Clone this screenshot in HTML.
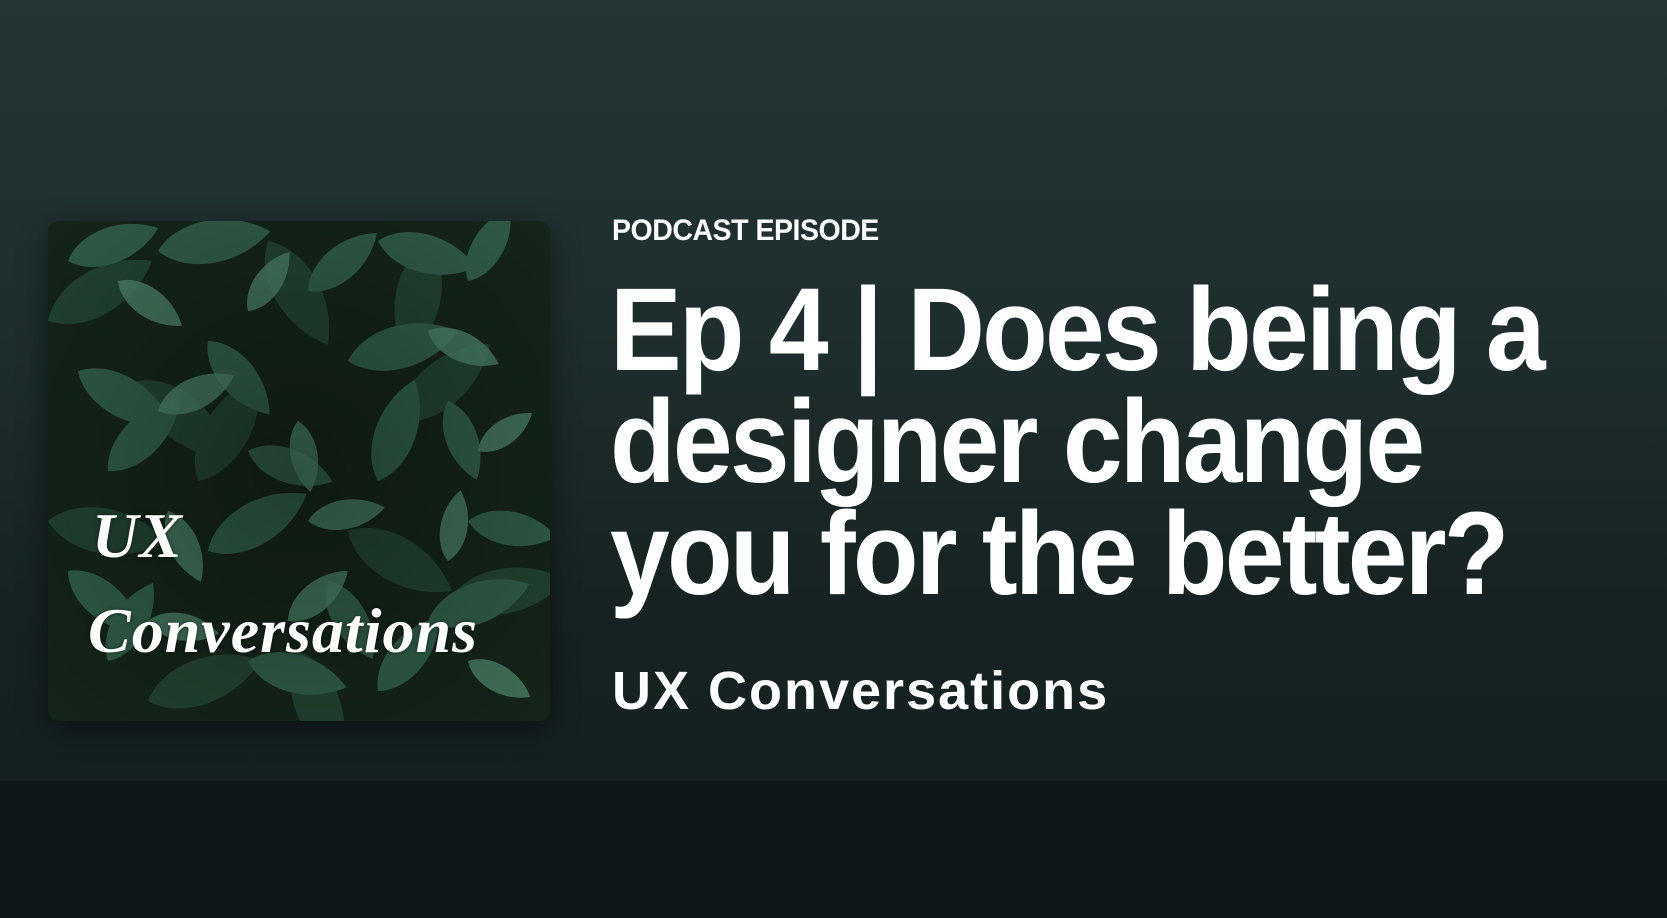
<!DOCTYPE html>
<html><head><meta charset="utf-8"><style>
html,body{margin:0;padding:0}
body{width:1667px;height:918px;overflow:hidden;position:relative;font-family:"Liberation Sans",sans-serif;
background:linear-gradient(180deg,#233535 0%,#1f2f2f 30%,#172323 65%,#142020 85%);}
.band{position:absolute;left:0;top:781px;width:1667px;height:137px;background:#0f1718}
.art{position:absolute;left:48px;top:221px;width:502px;height:500px;border-radius:12px;overflow:hidden;background:#14241e;box-shadow:0 8px 30px rgba(0,0,0,.45)}
.art svg{position:absolute;left:0;top:0}
.s{position:absolute;color:#fff;font-family:"Liberation Serif",serif;font-style:italic;font-weight:bold;font-size:64px;letter-spacing:1px;text-shadow:0 0 4px rgba(0,0,0,.5)}
.lbl{position:absolute;left:612px;top:214px;color:#fff;font-weight:bold;font-size:30px;transform:scaleX(.95);transform-origin:left top;letter-spacing:-0.5px}
.t{position:absolute;left:610px;color:#fff;font-weight:bold;font-size:118px;letter-spacing:-3px;transform:scaleX(.91);transform-origin:left top;white-space:nowrap;line-height:1}
.sub{position:absolute;left:612px;top:664px;color:#fff;font-weight:bold;font-size:54px;letter-spacing:2px;white-space:nowrap;line-height:1}
</style></head><body>
<div class="band"></div>
<div class="art">
<svg width="502" height="500" viewBox="0 0 502 500">
<defs>
<path id="lf" d="M0,0 C12,-14 40,-16 60,0 C40,16 12,14 0,0Z"/>
<radialGradient id="v" cx="50%" cy="50%" r="70%"><stop offset="0" stop-color="#000" stop-opacity=".3"/><stop offset="1" stop-color="#000" stop-opacity="0"/></radialGradient>
</defs>
<rect width="502" height="500" fill="#142419"/>
<g fill="#21412f">
<use href="#lf" transform="translate(0,100) rotate(-30) scale(2)"/>
<use href="#lf" transform="translate(90,160) rotate(40) scale(2)"/>
<use href="#lf" transform="translate(220,20) rotate(60) scale(2)"/>
<use href="#lf" transform="translate(350,200) rotate(-40) scale(2)"/>
<use href="#lf" transform="translate(0,300) rotate(10) scale(2)"/>
<use href="#lf" transform="translate(150,260) rotate(-60) scale(2)"/>
<use href="#lf" transform="translate(300,310) rotate(30) scale(2)"/>
<use href="#lf" transform="translate(100,480) rotate(-20) scale(2)"/>
<use href="#lf" transform="translate(250,430) rotate(70) scale(2)"/>
<use href="#lf" transform="translate(400,380) rotate(-10) scale(2)"/>
<use href="#lf" transform="translate(380,20) rotate(100) scale(2)"/>
</g>
<g fill="#2f5a46">
<use href="#lf" transform="translate(20,40) rotate(-20) scale(1.6)"/>
<use href="#lf" transform="translate(110,30) rotate(-10) scale(1.9)"/>
<use href="#lf" transform="translate(260,70) rotate(-40) scale(1.5)"/>
<use href="#lf" transform="translate(330,20) rotate(15) scale(1.7)"/>
<use href="#lf" transform="translate(420,60) rotate(-60) scale(1.4)"/>
<use href="#lf" transform="translate(30,150) rotate(30) scale(1.8)"/>
<use href="#lf" transform="translate(160,120) rotate(50) scale(1.6)"/>
<use href="#lf" transform="translate(300,140) rotate(-15) scale(1.9)"/>
<use href="#lf" transform="translate(400,180) rotate(70) scale(1.4)"/>
<use href="#lf" transform="translate(60,250) rotate(-45) scale(1.7)"/>
<use href="#lf" transform="translate(200,230) rotate(20) scale(1.5)"/>
<use href="#lf" transform="translate(330,260) rotate(-70) scale(1.8)"/>
<use href="#lf" transform="translate(420,300) rotate(10) scale(1.5)"/>
<use href="#lf" transform="translate(20,350) rotate(40) scale(1.6)"/>
<use href="#lf" transform="translate(160,330) rotate(-30) scale(1.9)"/>
<use href="#lf" transform="translate(280,360) rotate(60) scale(1.5)"/>
<use href="#lf" transform="translate(380,400) rotate(-20) scale(1.8)"/>
<use href="#lf" transform="translate(60,440) rotate(-60) scale(1.5)"/>
<use href="#lf" transform="translate(200,440) rotate(15) scale(1.7)"/>
<use href="#lf" transform="translate(330,470) rotate(-50) scale(1.6)"/>
</g>
<g fill="#4a8066" opacity=".8">
<use href="#lf" transform="translate(70,60) rotate(35) scale(1.3)"/>
<use href="#lf" transform="translate(200,90) rotate(-55) scale(1.2)"/>
<use href="#lf" transform="translate(380,110) rotate(25) scale(1.3)"/>
<use href="#lf" transform="translate(110,190) rotate(-25) scale(1.4)"/>
<use href="#lf" transform="translate(250,200) rotate(80) scale(1.2)"/>
<use href="#lf" transform="translate(430,230) rotate(-35) scale(1.1)"/>
<use href="#lf" transform="translate(120,290) rotate(65) scale(1.3)"/>
<use href="#lf" transform="translate(260,300) rotate(-10) scale(1.3)"/>
<use href="#lf" transform="translate(400,340) rotate(-80) scale(1.2)"/>
<use href="#lf" transform="translate(240,400) rotate(-40) scale(1.3)"/>
<use href="#lf" transform="translate(420,440) rotate(30) scale(1.2)"/>
<use href="#lf" transform="translate(100,400) rotate(10) scale(1.2)"/>
</g>
<rect width="502" height="500" fill="url(#v)"/>
</svg>
<div class="s" style="left:44px;top:278px">UX</div>
<div class="s" style="left:40px;top:373px">Conversations</div>
</div>
<div class="lbl">PODCAST EPISODE</div>
<div class="t" style="top:271px">Ep 4 | Does being a</div>
<div class="t" style="top:383px">designer change</div>
<div class="t" style="top:495px">you for the better?</div>
<div class="sub">UX Conversations</div>
</body></html>
